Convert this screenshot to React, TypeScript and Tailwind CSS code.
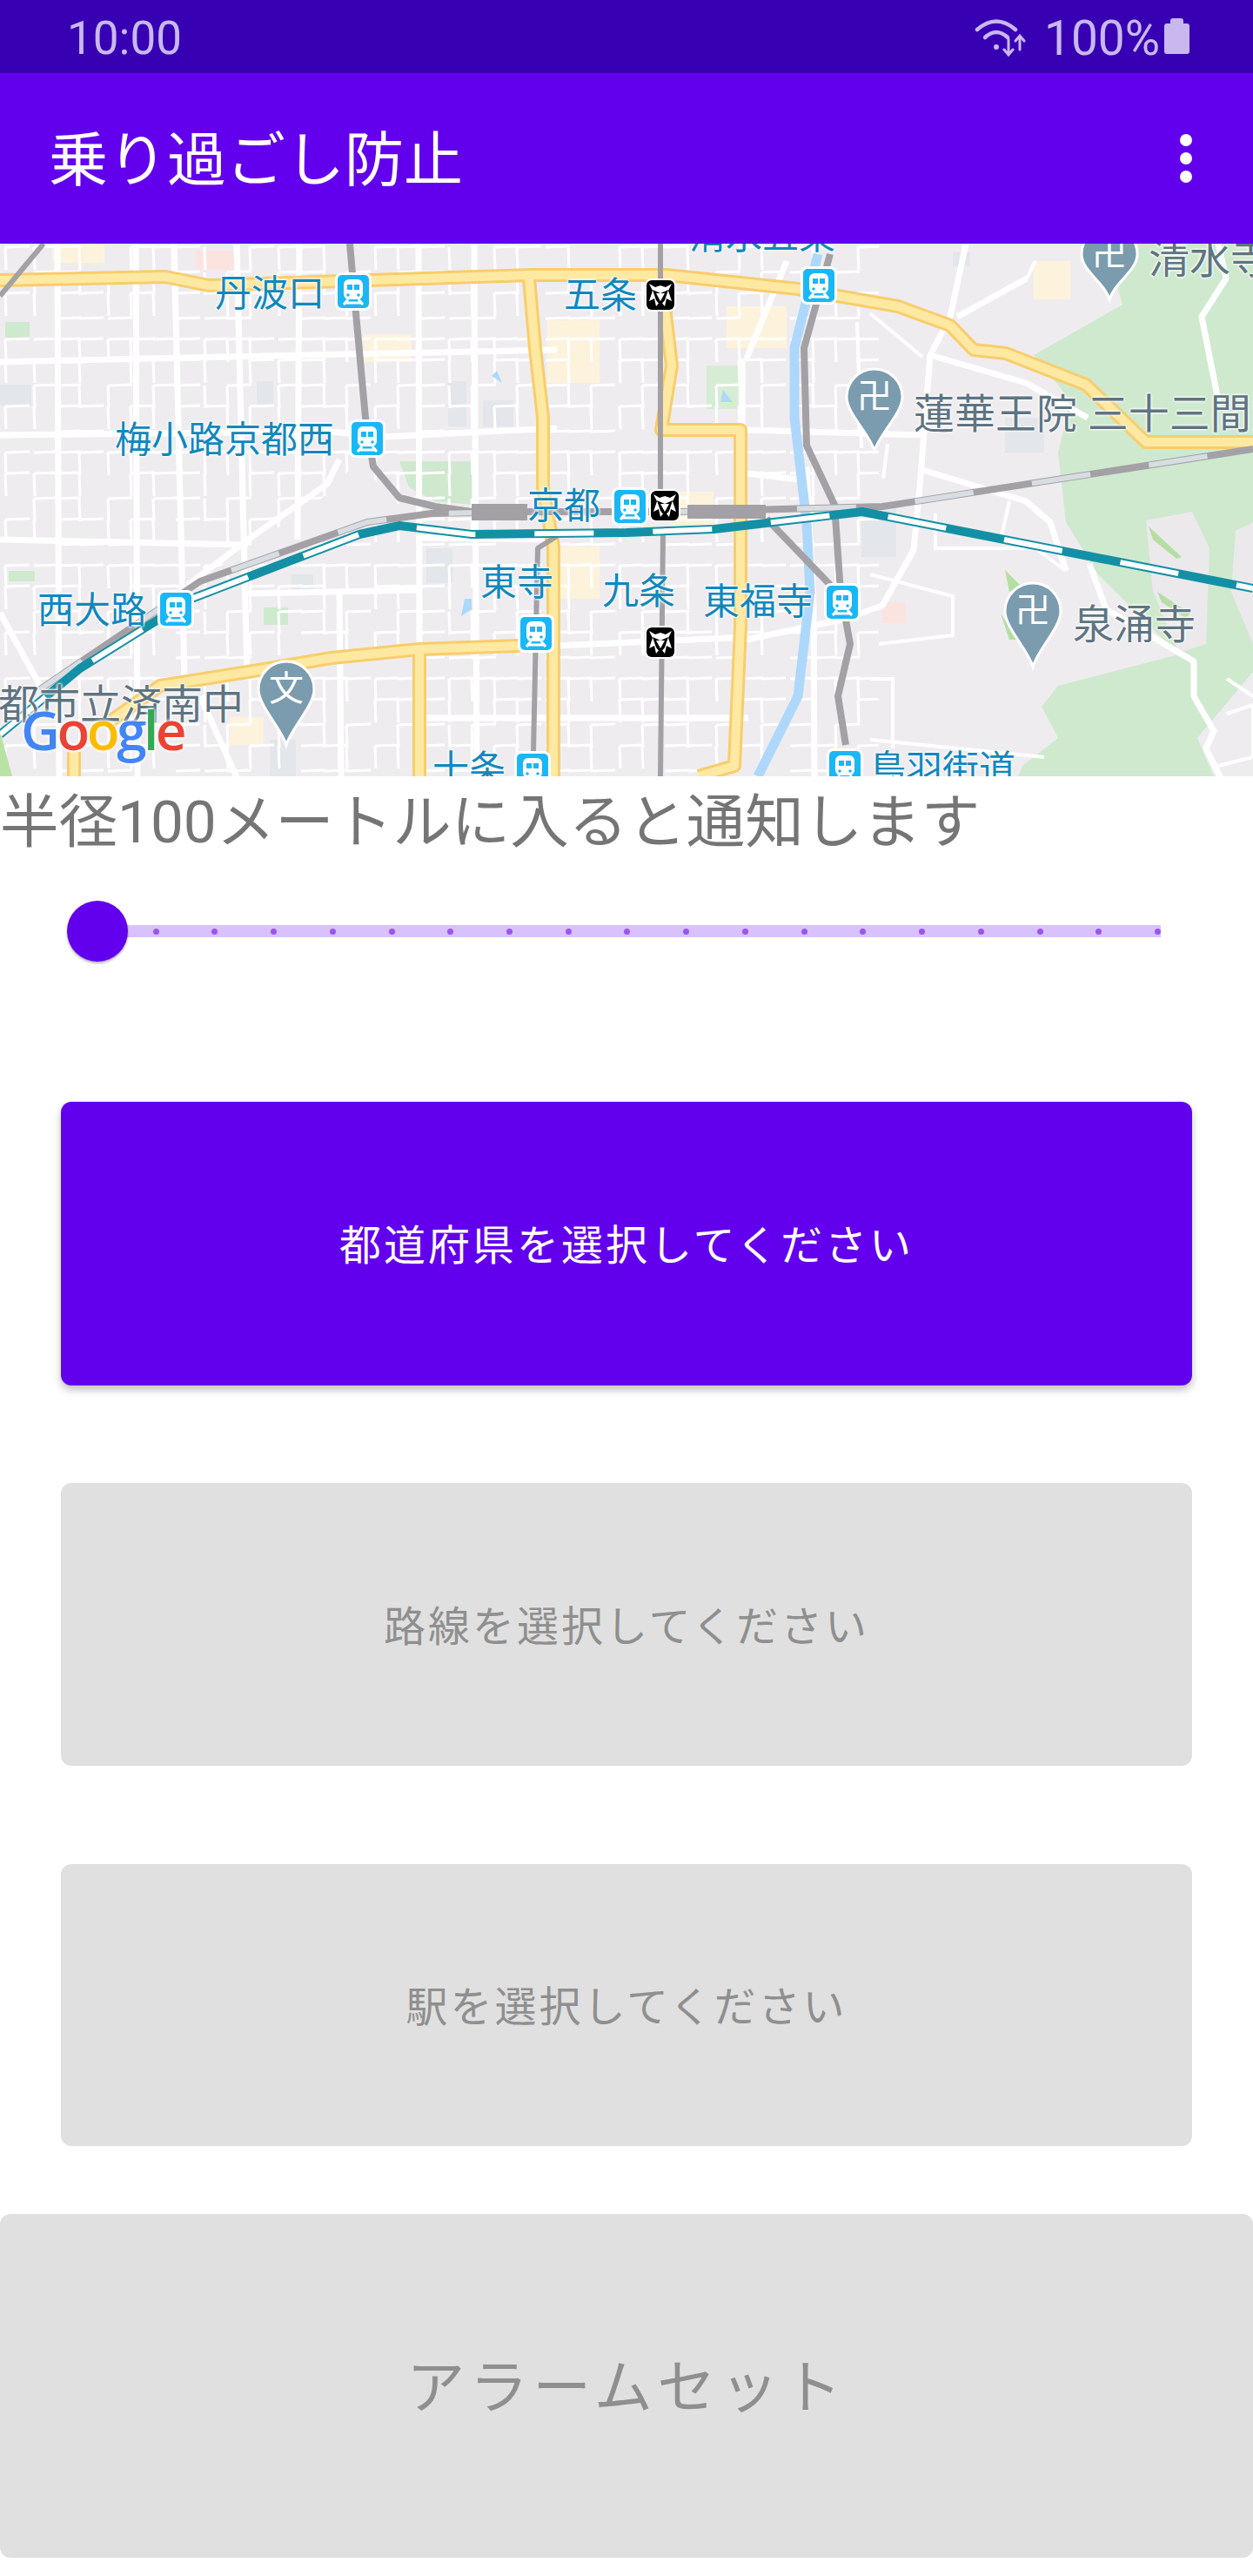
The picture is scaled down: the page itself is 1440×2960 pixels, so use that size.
import type { ReactNode } from "react"

type Pt = [number, number]

const poly = (pts: Pt[]) => pts.map((p, i) => `${i ? "L" : "M"}${p[0]} ${p[1]}`).join(" ")

// thin block streets, a loose grid with gaps
function minorStreets() {
  let d = ""
  for (let i = 0; i < 37; i++) {
    for (let j = 0; j < 25; j++) {
      const x = i * 28 + 6 + ((i * 5) % 7)
      const y = j * 26 + 4 + ((j * 3) % 5)
      if ((i * 7 + j * 13 + i * j) % 5 < 3) d += `M${x} ${y}L${x + 1} ${y + 26}`
      if ((i * 11 + j * 3 + i * j) % 5 < 3) d += `M${x} ${y}L${x + 28} ${y - 1}`
    }
  }
  return d
}

const mainStreets: Pt[][] = [
  [[66, 0], [68, 612]],
  [[156, 0], [158, 612]],
  [[200, 0], [212, 500]],
  [[272, 0], [284, 500]],
  [[344, 0], [342, 340]],
  [[481, 0], [482, 470]],
  [[545, 0], [548, 612]],
  [[0, 136], [346, 128], [640, 122]],
  [[0, 220], [380, 216], [440, 222], [640, 212]],
  [[0, 340], [285, 346]],
  [[285, 402], [482, 398]],
  [[482, 338], [640, 340]],
  [[390, 248], [376, 276], [285, 340], [216, 392]],
  [[0, 424], [46, 508]],
  [[230, 520], [275, 620]],
  [[390, 400], [392, 612]],
  [[640, 462], [860, 452]],
  [[486, 545], [860, 545]],
  [[1110, 0], [1092, 84], [1069, 128], [1057, 280], [1050, 352], [1014, 416], [968, 432], [853, 456]],
  [[1069, 128], [1179, 160], [1250, 200]],
  [[1060, 260], [1179, 296], [1207, 320], [1225, 376]],
  [[858, 132], [904, 20]],
  [[853, 132], [853, 440]],
  [[927, 256], [935, 420], [936, 620]],
  [[858, 214], [1060, 220]],
  [[858, 264], [927, 272]],
  [[1100, 84], [1180, 40]],
  [[1400, 0], [1409, 40], [1381, 84], [1400, 180]],
  [[1252, 368], [1271, 420], [1372, 480], [1372, 520], [1395, 560], [1386, 580], [1404, 616]],
]

const thinRight: Pt[][] = [
  [[1160, 296], [1150, 340], [1190, 350], [1225, 376]],
  [[1075, 310], [1075, 350], [1180, 350]],
  [[1000, 380], [1095, 405], [1095, 450], [1010, 460]],
  [[1000, 500], [1026, 500], [1026, 580]],
  [[1000, 570], [1200, 590]],
  [[1410, 500], [1440, 520]],
  [[1410, 540], [1440, 530], [1440, 590], [1400, 600]],
  [[1180, 40], [1190, 20]],
  [[1000, 80], [1060, 130]],
  [[985, 90], [990, 235]],
  [[1020, 230], [1015, 270]],
]

const yellowRoads: Pt[][] = [
  [[0, 42], [190, 38], [240, 48], [611, 36], [766, 36], [917, 52], [1032, 72], [1092, 94], [1119, 122], [1156, 126], [1248, 162], [1317, 228], [1440, 228]],
  [[608, 40], [615, 120], [624, 200], [624, 280], [636, 348], [636, 612]],
  [[128, 548], [184, 508], [285, 492], [381, 476], [482, 466], [597, 462]],
  [[482, 466], [482, 612]],
  [[85, 584], [85, 612]],
  [[760, 40], [772, 140], [760, 214], [851, 214], [851, 440], [844, 600], [803, 612]],
]

const rails: Pt[][] = [
  [[402, 0], [409, 80], [420, 200], [429, 256], [459, 292], [500, 302], [542, 308], [780, 308]],
  [[46, 512], [230, 388], [422, 320], [496, 310], [606, 308]],
  [[759, 0], [759, 300]],
  [[762, 330], [759, 612]],
  [[640, 336], [618, 350], [613, 584]],
  [[780, 308], [1014, 302], [1440, 236]],
  [[954, 12], [924, 120], [927, 232], [959, 300], [966, 400], [977, 460], [963, 520], [972, 576]],
  [[881, 316], [954, 392]],
  [[0, 60], [50, 0]],
]

const teal: Pt[] = [[0, 564], [92, 488], [220, 408], [413, 334], [459, 324], [542, 334], [720, 332], [821, 328], [991, 308], [1440, 396]]

const stations: Pt[] = [[406, 55], [422, 224], [724, 302], [202, 420], [616, 448], [612, 605], [941, 48], [968, 412], [971, 602]]
const subways: Pt[] = [[759, 59], [764, 301], [759, 458]]

function Station({ at }: { at: Pt }) {
  return (
    <g transform={`translate(${at[0]} ${at[1]})`}>
      <rect x={-21} y={-22} width={42} height={44} rx={8} fill="#fff" />
      <rect x={-18} y={-19} width={36} height={38} rx={5} fill="#1ab7f6" />
      <rect x={-11} y={-14} width={22} height={23} rx={6} fill="#fff" />
      <rect x={-7} y={-8} width={6} height={6} fill="#1ab7f6" />
      <rect x={1} y={-8} width={6} height={6} fill="#1ab7f6" />
      <circle cx={-6} cy={4} r={1.8} fill="#1ab7f6" />
      <circle cx={6} cy={4} r={1.8} fill="#1ab7f6" />
      <path d="M-6 9 L-11 15 M6 9 L11 15 M-9 13 H9" stroke="#fff" strokeWidth={3} fill="none" />
    </g>
  )
}

function Subway({ at }: { at: Pt }) {
  return (
    <g transform={`translate(${at[0]} ${at[1]})`}>
      <rect x={-18} y={-19} width={36} height={38} rx={8} fill="#fff" />
      <rect x={-16} y={-17} width={32} height={34} rx={6} fill="#000" />
      <path d="M-13 -13 L-6 -9 L0 -11 L6 -9 L13 -13 L9 -5 L13 7 L7 4 L5 13 L0 7 L-5 13 L-7 4 L-13 7 L-9 -5 Z" fill="#fff" />
      <path d="M-9 -6 L0 -2 L9 -6 L5 6 L0 12 L-5 6 Z" fill="#000" />
      <path d="M-5 -2 H5 L0 7 Z" fill="#fff" />
    </g>
  )
}

function Pin({ x, cy, tip }: { x: number; cy: number; tip: number }) {
  const r = 32
  return (
    <path
      d={`M${x} ${tip} C${x - 6} ${tip - 20} ${x - r} ${cy + r * 0.6} ${x - r} ${cy} A${r} ${r} 0 1 1 ${x + r} ${cy} C${x + r} ${cy + r * 0.6} ${x + 6} ${tip - 20} ${x} ${tip} Z`}
      fill="#7a9cae"
      stroke="#fff"
      strokeWidth={3}
    />
  )
}

function MapArt() {
  return (
    <svg viewBox="0 0 1440 612" className="block h-full w-full">
      <rect width={1440} height={612} fill="#efecef" />

      {/* park and hills */}
      <path
        d="M1270 0 L1290 70 L1188 128 L1230 180 L1216 240 L1225 320 L1262 380 L1354 472 L1216 508 L1197 532 L1216 568 L1175 600 L1170 612 L1395 612 L1376 568 L1440 492 L1440 0 Z"
        fill="#cfe9cf"
      />
      <path d="M1317 318 L1370 308 L1390 350 L1386 460 L1355 470 L1325 400 Z" fill="#ece9ec" />
      <path d="M1420 330 L1440 320 L1440 460 L1415 400 Z" fill="#ece9ec" />
      <path d="M1320 325 L1358 360 L1352 362 L1325 340 Z M1330 400 L1368 425 L1362 430 L1335 412 Z M1155 375 L1175 395 L1160 400 Z M1150 425 L1170 455 L1160 455 Z" fill="#b5dea4" />
      <path d="M459 250 L542 250 L542 300 L500 296 L470 280 Z" fill="#cfe9cf" />
      <rect x={6} y={90} width={28} height={18} fill="#cfe9cf" />
      <rect x={10} y={376} width={30} height={12} fill="#cfe9cf" />
      <rect x={303} y={418} width={28} height={20} fill="#cfe9cf" />
      <rect x={812} y={140} width={36} height={50} fill="#d7ecd5" />
      <rect x={1095} y={10} width={20} height={16} fill="#e3e6ea" />

      {/* built-up patches */}
      <path d="M60 0 H120 V22 H60 Z M418 104 H473 V136 H418 Z M629 88 H689 V160 H629 Z M835 72 H904 V120 H835 Z M1188 20 H1230 V64 H1188 Z M643 348 H689 V408 H643 Z M264 544 H303 V576 H264 Z M770 285 H820 V330 H770 Z" fill="#fdf3dc" />
      <path d="M225 8 H271 V30 H225 Z M1014 412 H1041 V436 H1014 Z" fill="#fbe4e0" />
      <path d="M0 162 H36 V186 H0 Z M295 158 H314 V186 H295 Z M515 158 H536 V210 H515 Z M490 350 H520 V390 H490 Z M335 380 H360 V400 H335 Z M555 180 H590 V210 H555 Z M990 300 H1030 V360 H990 Z M310 570 H340 V612 H310 Z M1155 200 H1200 V240 H1155 Z" fill="#e3e6ea" />

      <defs>
        <clipPath id="grid">
          <path d="M0 0 H1010 V612 H0 Z" />
        </clipPath>
      </defs>
      <path d={minorStreets()} stroke="#fff" strokeWidth={3} fill="none" clipPath="url(#grid)" />

      {/* open triangle around the rail yard */}
      <path d="M220 392 L285 350 L376 288 L410 250 L459 300 L496 306 L422 316 L232 384 Z" fill="#efecef" />

      {/* river mouth and park in the lower left corner */}
      <path d="M0 560 L14 612 H0 Z" fill="#b9e3a5" />

      {thinRight.map((r, i) => (
        <path key={i} d={poly(r)} stroke="#fff" strokeWidth={4} fill="none" />
      ))}
      {mainStreets.map((r, i) => (
        <path key={i} d={poly(r)} stroke="#fff" strokeWidth={7} fill="none" strokeLinejoin="round" />
      ))}

      <path d="M940 12 L913 120 L913 200 L927 320 L931 400 L917 520 L871 612" stroke="#aed8fb" strokeWidth={11} fill="none" />
      <path d="M571 146 L577 160 L565 152 Z M534 408 H542 V420 L530 428 Z M831 168 L842 182 L828 182 Z" fill="#aed8fb" />

      {yellowRoads.map((r, i) => (
        <path key={i} d={poly(r)} stroke="#f8cd6c" strokeWidth={16} fill="none" strokeLinejoin="round" />
      ))}
      {yellowRoads.map((r, i) => (
        <path key={i} d={poly(r)} stroke="#fee9a3" strokeWidth={10} fill="none" strokeLinejoin="round" />
      ))}

      {rails.map((r, i) => (
        <path key={i} d={poly(r)} stroke="#a3a1a6" strokeWidth={i === 2 || i === 3 || i === 4 || i === 8 ? 6 : 8} fill="none" strokeLinejoin="round" />
      ))}
      <path d={poly(rails[5])} stroke="#d8dde1" strokeWidth={6} strokeDasharray="68 68" fill="none" />
      <path d={poly(rails[1])} stroke="#d8dde1" strokeWidth={6} strokeDasharray="58 72" fill="none" />
      <path d="M542 299 H606 V318 H542 Z M790 300 H880 V316 H790 Z" fill="#a3a1a6" />
      <path d={poly(teal)} stroke="#1390a5" strokeWidth={10} fill="none" strokeLinejoin="round" />
      <path d={poly(teal)} stroke="#fff" strokeWidth={6} strokeDasharray="68 68" fill="none" />

      <Pin x={329} cy={512} tip={576} />
      <Pin x={1005} cy={176} tip={238} />
      <Pin x={1187} cy={422} tip={486} />
      <Pin x={1275} cy={12} tip={64} />

      {stations.map((s, i) => (
        <Station key={i} at={s} />
      ))}
      {subways.map((s, i) => (
        <Subway key={i} at={s} />
      ))}
    </svg>
  )
}

const blueLabels = [
  { text: "丹波口", cls: "left-[247px] top-[36px]" },
  { text: "五条", cls: "left-[648px] top-[38px]" },
  { text: "梅小路京都西", cls: "left-[132px] top-[204px]" },
  { text: "京都", cls: "left-[606px] top-[280px]" },
  { text: "東寺", cls: "left-[552px] top-[368px]" },
  { text: "九条", cls: "left-[692px] top-[378px]" },
  { text: "東福寺", cls: "left-[808px] top-[390px]" },
  { text: "西大路", cls: "left-[43px] top-[400px]" },
  { text: "十条", cls: "left-[497px] top-[582px]" },
  { text: "鳥羽街道", cls: "left-[999px] top-[582px]" },
  { text: "清水五条", cls: "left-[792px] top-[-30px]" },
]

const grayLabels = [
  { text: "清水寺", cls: "left-[1320px] top-[-6px]" },
  { text: "蓮華王院 三十三間堂", cls: "left-[1050px] top-[172px]" },
  { text: "泉涌寺", cls: "left-[1233px] top-[414px]" },
  { text: "都市立済南中", cls: "left-[-2px] top-[506px]" },
]

const pinGlyphs = [
  { text: "文", cls: "left-[309px] top-[488px]" },
  { text: "卍", cls: "left-[985px] top-[152px]" },
  { text: "卍", cls: "left-[1167px] top-[398px]" },
  { text: "卍", cls: "left-[1255px] top-[-12px]" },
]

function WideButton({ label, active, className }: { label: string; active?: boolean; className: string }): ReactNode {
  return (
    <button
      className={`flex items-center justify-center rounded-[12px] pt-[6px] ${active ? "bg-[#6200ee] text-white shadow-[0_5px_10px_rgba(0,0,0,0.25)]" : "bg-[#e0e0e0] text-[#8f8f8f]"} ${className}`}
    >
      {label}
    </button>
  )
}

export default function App() {
  const ticks = Array.from({ length: 19 }, (_, i) => i)

  return (
    <div className="h-[2960px] w-[1440px] overflow-hidden bg-white font-['Roboto','Noto_Sans_CJK_JP',sans-serif]">
      {/* status bar */}
      <div className="flex h-[84px] items-center justify-between bg-[#3700b3] pt-[5px] pl-[77px] pr-[73px] text-[53px] text-[#c9b8f0]">
        <span className="leading-none">10:00</span>
        <div className="flex items-center">
          <svg viewBox="0 0 62 46" className="mr-[18px] mb-[6px] h-[46px] w-[62px]" fill="none" stroke="#c9b8f0" strokeLinecap="round">
            <path d="M3 15 Q25 -4 47 15" strokeWidth={4.5} />
            <path d="M12 24 Q25 12 38 24" strokeWidth={4.5} />
            <circle cx={25} cy={35} r={3} fill="#c9b8f0" stroke="none" />
            <path d="M39 26 V43 M34 38 L39 44 L44 38 M52 22 V38 M47 28 L52 22 L57 28" strokeWidth={3} />
          </svg>
          <span className="text-[55px] leading-none">100%</span>
          <svg viewBox="0 0 29 41" className="mb-[6px] ml-[5px] h-[41px] w-[29px]" fill="#c9b8f0">
            <path d="M7 3 Q7 0 10 0 H19 Q22 0 22 3 V6 H26 Q29 6 29 9 V38 Q29 41 26 41 H3 Q0 41 0 38 V9 Q0 6 3 6 H7 Z" />
          </svg>
        </div>
      </div>

      {/* app bar */}
      <div className="flex h-[196px] items-center justify-between bg-[#6200ee] pl-[56px] pr-[70px] text-white">
        <h1 className="pt-[6px] text-[68px] leading-none font-normal">乗り過ごし防止</h1>
        <div className="flex flex-col gap-[7px]">
          <span className="size-[14px] rounded-full bg-white" />
          <span className="size-[14px] rounded-full bg-white" />
          <span className="size-[14px] rounded-full bg-white" />
        </div>
      </div>

      {/* map */}
      <div className="relative h-[612px] overflow-hidden">
        <MapArt />
        {pinGlyphs.map((g, i) => (
          <span key={i} className={`absolute text-[40px] leading-[48px] text-white ${g.cls}`}>
            {g.text}
          </span>
        ))}
        {blueLabels.map((l) => (
          <span
            key={l.text}
            className={`absolute text-[42px] leading-[44px] whitespace-nowrap text-[#1188bd] [text-shadow:0_0_3px_#fff,0_0_3px_#fff,0_0_3px_#fff] ${l.cls}`}
          >
            {l.text}
          </span>
        ))}
        {grayLabels.map((l) => (
          <span
            key={l.text}
            className={`absolute text-[47px] leading-[48px] whitespace-nowrap text-[#5f7482] [text-shadow:0_0_3px_#fff,0_0_3px_#fff,0_0_3px_#fff] ${l.cls}`}
          >
            {l.text}
          </span>
        ))}
        <div className="absolute top-[518px] left-[24px] font-['Open_Sans',sans-serif] text-[62px] leading-[80px] font-semibold tracking-[-3.5px] [text-shadow:0_0_4px_#fff,0_0_4px_#fff]">
          <span className="text-[#4285f4]">G</span>
          <span className="text-[#ea4335]">o</span>
          <span className="text-[#fbbc05]">o</span>
          <span className="text-[#4285f4]">g</span>
          <span className="text-[#34a853]">l</span>
          <span className="text-[#ea4335]">e</span>
        </div>
      </div>

      {/* radius label */}
      <div className="flex h-[102px] items-center pt-[3px] text-[67.5px] leading-none whitespace-nowrap text-[#757575]">
        半径100メートルに入ると通知します
      </div>

      {/* slider */}
      <div className="relative mt-[41px] ml-[112px] flex h-[70px] w-[1222px] items-center">
        <div className="ml-[-4px] flex h-[14px] w-[1226px] shrink-0 items-center justify-between bg-[#d9c2fb]">
          {ticks.map((t) => (
            <span key={t} className="size-[7px] rounded-full bg-[#9a55ee]" />
          ))}
        </div>
        <span className="absolute top-0 left-[-35px] size-[70px] rounded-full bg-[#6200ee] shadow-[0_2px_3px_rgba(0,0,0,0.3)]" />
      </div>

      {/* buttons */}
      <WideButton label="都道府県を選択してください" active className="mt-[161px] ml-[70px] h-[326px] w-[1300px] text-[48px] tracking-[3px]" />
      <WideButton label="路線を選択してください" className="mt-[112px] ml-[70px] h-[325px] w-[1300px] text-[48px] tracking-[3px]" />
      <WideButton label="駅を選択してください" className="mt-[113px] ml-[70px] h-[324px] w-[1300px] text-[48px] tracking-[3px]" />
      <WideButton label="アラームセット" className="mt-[78px] h-[395px] w-[1440px] text-[67px] tracking-[5.5px]" />
    </div>
  )
}
